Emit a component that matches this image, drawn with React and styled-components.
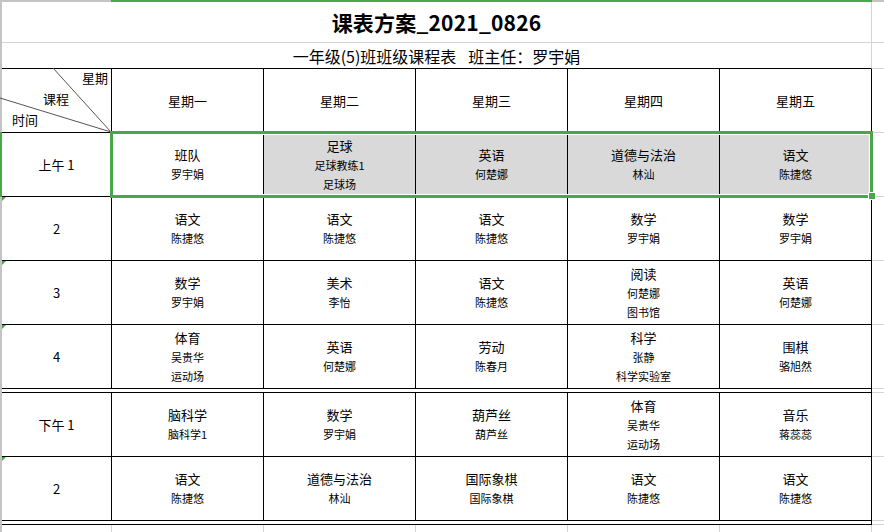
import React from "react";
import styled, { createGlobalStyle } from "styled-components";

const GREEN = "#4aa64a";
const GRID = "#d4d4d4";
const HEAD = "#c4c4c4";

const Global = createGlobalStyle`
  html, body { margin: 0; padding: 0; background: #fff; }
  body { font-family: "Noto Sans CJK SC", "Noto Sans", sans-serif; color: #000; }
`;

const Page = styled.div`
  position: relative;
  width: 884px;
  height: 532px;
  overflow: hidden;
  display: grid;
  grid-template-columns: 2px 1fr;
  grid-template-rows: 2px 1fr;
  background: #fff;
`;

const Corner = styled.div`
  background: ${HEAD};
`;

const TopBar = styled.div`
  display: grid;
  grid-template-columns: 109px 761px 1fr;
`;

const LeftBar = styled.div`
  display: grid;
  grid-template-rows: 130px 65px 1fr;
`;

const Seg = styled.div`
  background: ${(p) => (p.$on ? GREEN : HEAD)};
`;

const Sheet = styled.div`
  display: flex;
  flex-direction: column;
`;

const Row = styled.div`
  display: grid;
  grid-template-columns: 110px repeat(5, 152px) 1fr;
  height: ${(p) => p.$h}px;
  flex: none;
`;

const Cell = styled.div`
  position: relative;
  box-sizing: border-box;
  border-right: 1px solid ${(p) => (p.$grid ? GRID : "#000")};
  border-bottom: 1px solid ${(p) => (p.$grid ? GRID : "#000")};
  background: ${(p) => (p.$sel ? "#d9d9d9" : "#fff")};
  display: flex;
  flex-direction: column;
  align-items: center;
  justify-content: center;
  text-align: center;
`;

const Filler = styled.div`
  border-bottom: 1px solid ${GRID};
`;

const Merged = styled.div`
  grid-column: 1 / 7;
  box-sizing: border-box;
  border-right: 1px solid ${(p) => (p.$black ? "#000" : GRID)};
  border-bottom: 1px solid ${(p) => (p.$bottom === "black" ? "#000" : GRID)};
  display: flex;
  align-items: center;
  justify-content: center;
`;

const Title = styled.span`
  font-size: 21px;
  font-weight: 700;
  letter-spacing: 0.2px;
`;

const Subtitle = styled.span`
  font-size: 16px;
  display: flex;
  gap: 12px;
`;

const DayName = styled.span`
  font-size: 13px;
`;

const Label = styled.span`
  font-size: 13px;
  line-height: 20px;
`;

const Subject = styled.div`
  font-size: 13px;
  line-height: 20px;
`;

const Teacher = styled.div`
  font-size: 11px;
  line-height: 19px;
`;

const DiagCell = styled.div`
  position: relative;
  box-sizing: border-box;
  border-right: 1px solid #000;
  border-bottom: 1px solid #000;
  display: flex;
  flex-direction: column;
  font-size: 13px;
  line-height: 21px;
`;

const DiagLines = styled.svg`
  position: absolute;
  left: 0;
  top: 0;
  width: 109px;
  height: 63px;
  overflow: visible;
`;

const DiagText = styled.div`
  position: relative;
  align-self: ${(p) => (p.$right ? "flex-end" : "flex-start")};
  padding-left: ${(p) => p.$pl || 0}px;
  padding-right: ${(p) => p.$pr || 0}px;
  margin-top: ${(p) => p.$mt || 0}px;
`;

const Marker = styled.span`
  position: absolute;
  left: 0;
  top: 0;
  width: 0;
  height: 0;
  border-top: 4px solid ${GREEN};
  border-right: 4px solid transparent;
`;

const Selection = styled.div`
  position: absolute;
  left: 110px;
  top: 131px;
  width: 763px;
  height: 67px;
  box-sizing: border-box;
  border: 3px solid ${GREEN};
  box-shadow: inset 0 0 0 1px #fff;
  pointer-events: none;
`;

const Handle = styled.span`
  position: absolute;
  right: -5px;
  bottom: -4px;
  width: 6px;
  height: 6px;
  background: ${GREEN};
  box-shadow: 0 0 0 1px #fff;
`;

const days = ["星期一", "星期二", "星期三", "星期四", "星期五"];

const morning = [
  {
    label: "上午 1",
    cells: [["班队", "罗宇娟"], ["足球", "足球教练1", "足球场"], ["英语", "何楚娜"], ["道德与法治", "林汕"], ["语文", "陈捷悠"]],
    selected: true,
  },
  {
    label: "2",
    marker: true,
    cells: [["语文", "陈捷悠"], ["语文", "陈捷悠"], ["语文", "陈捷悠"], ["数学", "罗宇娟"], ["数学", "罗宇娟"]],
  },
  {
    label: "3",
    marker: true,
    cells: [["数学", "罗宇娟"], ["美术", "李怡"], ["语文", "陈捷悠"], ["阅读", "何楚娜", "图书馆"], ["英语", "何楚娜"]],
  },
  {
    label: "4",
    marker: true,
    cells: [["体育", "吴贵华", "运动场"], ["英语", "何楚娜"], ["劳动", "陈春月"], ["科学", "张静", "科学实验室"], ["围棋", "骆旭然"]],
  },
];

const afternoon = [
  {
    label: "下午 1",
    cells: [["脑科学", "脑科学1"], ["数学", "罗宇娟"], ["葫芦丝", "葫芦丝"], ["体育", "吴贵华", "运动场"], ["音乐", "蒋蕊蕊"]],
  },
  {
    label: "2",
    marker: true,
    cells: [["语文", "陈捷悠"], ["道德与法治", "林汕"], ["国际象棋", "国际象棋"], ["语文", "陈捷悠"], ["语文", "陈捷悠"]],
  },
];

function LessonRow({ row }) {
  return (
    <Row $h={64}>
      <Cell>
        {row.marker && <Marker />}
        <Label>{row.label}</Label>
      </Cell>
      {row.cells.map(([subject, ...rest], i) => (
        <Cell key={i} $sel={row.selected && i > 0}>
          <Subject>{subject}</Subject>
          {rest.map((t, j) => (
            <Teacher key={j}>{t}</Teacher>
          ))}
        </Cell>
      ))}
      <Filler />
    </Row>
  );
}

function Separator() {
  return (
    <Row $h={4}>
      <Merged $black $bottom="black" />
      <Filler />
    </Row>
  );
}

export default function App() {
  return (
    <>
      <Global />
      <Page>
        <Corner />
        <TopBar>
          <Seg />
          <Seg $on />
          <Seg />
        </TopBar>
        <LeftBar>
          <Seg />
          <Seg $on />
          <Seg />
        </LeftBar>
        <Sheet>
          <Row $h={41}>
            <Merged>
              <Title>课表方案_2021_0826</Title>
            </Merged>
            <Filler />
          </Row>
          <Row $h={26}>
            <Merged $bottom="black">
              <Subtitle>
                <span>一年级(5)班班级课程表</span>
                <span>班主任：罗宇娟</span>
              </Subtitle>
            </Merged>
            <Filler />
          </Row>
          <Row $h={64}>
            <DiagCell>
              <DiagLines viewBox="0 0 109 63">
                <line x1="109" y1="63" x2="51" y2="-1" stroke="#555" strokeWidth="1" />
                <line x1="109" y1="63" x2="-2" y2="29" stroke="#555" strokeWidth="1" />
              </DiagLines>
              <DiagText $right $pr={3} $mt={-2}>星期</DiagText>
              <DiagText $pl={41}>课程</DiagText>
              <DiagText $pl={10}>时间</DiagText>
            </DiagCell>
            {days.map((d) => (
              <Cell key={d}>
                <DayName>{d}</DayName>
              </Cell>
            ))}
            <Filler />
          </Row>
          {morning.map((r, i) => (
            <LessonRow key={"m" + i} row={r} />
          ))}
          <Separator />
          {afternoon.map((r, i) => (
            <LessonRow key={"a" + i} row={r} />
          ))}
          <Separator />
          <Row $h={40}>
            {Array.from({ length: 6 }).map((_, i) => (
              <Cell key={i} $grid />
            ))}
            <Filler />
          </Row>
        </Sheet>
        <Selection>
          <Handle />
        </Selection>
      </Page>
    </>
  );
}
